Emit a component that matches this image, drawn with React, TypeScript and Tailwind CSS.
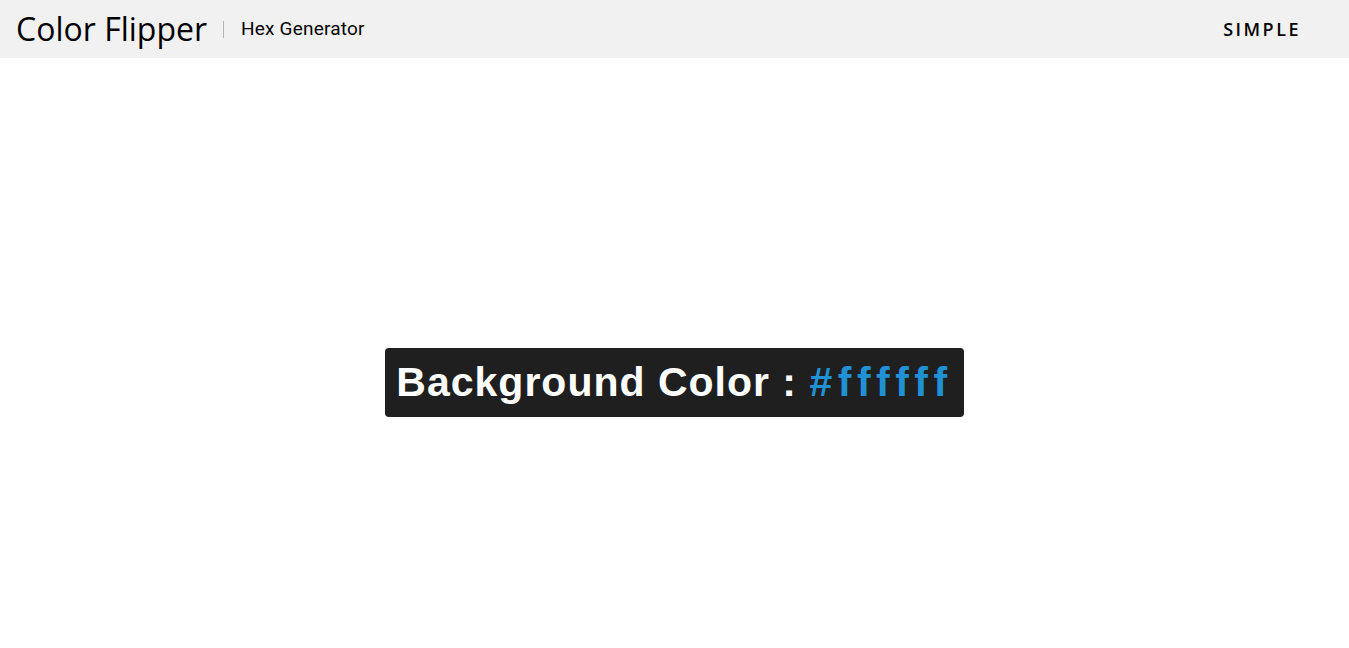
import React from "react"

export default function App() {
  const color = "#ffffff"
  return (
    <div className="min-h-screen bg-white" style={{ backgroundColor: color }}>
      <nav className="flex h-[58px] items-center justify-between bg-[#f1f1f1] pl-4 pr-[48px]">
        <div className="flex items-center">
          <h1 className="font-['Open_Sans',sans-serif] text-[32px] leading-none text-black">Color Flipper</h1>
          <span className="ml-4 h-[17px] w-px bg-[#b5b5b5]"></span>
          <span className="ml-[17px] font-['Roboto',sans-serif] text-[19px] tracking-[0.2px] text-black">Hex Generator</span>
        </div>
        <a className="font-['Open_Sans',sans-serif] text-[18px] font-semibold tracking-[2.5px] text-black">SIMPLE</a>
      </nav>
      <main className="flex h-screen items-center justify-center">
        <div className="rounded-[4px] bg-[#1f1f1f] px-[11px] py-[10px]">
          <h2 className="font-['Liberation_Sans',Arial,sans-serif] text-[41px] font-bold leading-[49px] tracking-[1px] text-white">
            Background Color : <span className="tracking-[5.5px] text-[#2191d6]">{color}</span>
          </h2>
        </div>
      </main>
    </div>
  )
}
